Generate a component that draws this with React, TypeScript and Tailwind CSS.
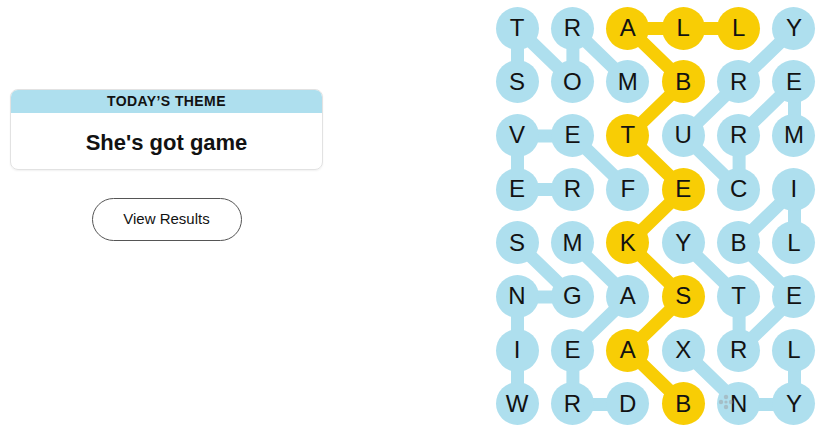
import React from "react";

const letters = [
  "TRALLY",
  "SOMBRE",
  "VETURM",
  "ERFECI",
  "SMKYBL",
  "NGASTE",
  "IEAXRL",
  "WRDBNY",
];

type P = [number, number];

const words: { color: "blue" | "gold"; path: P[] }[] = [
  { color: "blue", path: [[1, 0], [0, 0], [1, 1], [0, 1], [1, 2]] },
  { color: "blue", path: [[3, 2], [2, 1], [2, 0], [3, 0], [3, 1]] },
  { color: "blue", path: [[2, 5], [1, 5], [2, 4], [3, 4], [2, 3], [1, 4], [0, 5]] },
  { color: "blue", path: [[4, 5], [3, 5], [4, 4], [5, 5], [6, 4], [5, 4], [4, 3]] },
  { color: "blue", path: [[6, 5], [7, 5], [7, 4], [6, 3]] },
  { color: "blue", path: [[7, 0], [6, 0], [5, 0], [5, 1], [4, 0]] },
  { color: "blue", path: [[7, 2], [7, 1], [6, 1], [5, 2], [4, 1]] },
  {
    color: "gold",
    path: [[7, 3], [6, 2], [5, 3], [4, 2], [3, 3], [2, 2], [1, 3], [0, 2], [0, 3], [0, 4]],
  },
];

const gold = new Set(words.filter((w) => w.color === "gold").flatMap((w) => w.path.map(([r, c]) => `${r}-${c}`)));

const cx = (c: number) => 21.5 + 55.4 * c;
const cy = (r: number) => 21.5 + 53.7 * r;

function Board() {
  return (
    <div className="relative mt-[6.5px] ml-[172.5px]">
      <svg className="absolute left-0 top-0" width="320" height="420">
        {words.map((w, i) => (
          <polyline
            key={i}
            points={w.path.map(([r, c]) => `${cx(c)},${cy(r)}`).join(" ")}
            fill="none"
            stroke={w.color === "gold" ? "#f8cd05" : "#aedfee"}
            strokeWidth="13"
            strokeLinejoin="round"
            strokeLinecap="round"
          />
        ))}
      </svg>
      <div className="relative grid grid-cols-[repeat(6,43px)] gap-x-[12.4px] gap-y-[10.7px]">
        {letters.map((row, r) =>
          row.split("").map((ch, c) => (
            <div
              key={`${r}-${c}`}
              className={`flex h-[43px] w-[43px] items-center justify-center rounded-full text-[24px] leading-none text-[#121212] ${
                gold.has(`${r}-${c}`) ? "bg-[#f8cd05]" : "bg-[#aedfee]"
              }`}
            >
              {ch}
            </div>
          ))
        )}
      </div>
      {/* faint watermark */}
      <svg className="absolute left-[222px] top-[387px] opacity-40" width="16" height="16" viewBox="0 0 16 16">
        <g fill="#9a8f8f">
          <circle cx="8" cy="3" r="2.2" />
          <circle cx="8" cy="13" r="2.2" />
          <circle cx="3" cy="8" r="2.2" />
          <circle cx="13" cy="8" r="2.2" />
          <circle cx="8" cy="8" r="1.6" />
        </g>
      </svg>
    </div>
  );
}

export default function App() {
  return (
    <div className="flex h-[433px] w-[825px] bg-white font-['Liberation_Sans',Arial,sans-serif] text-[#121212]">
      <div className="ml-[10px] flex w-[313px] flex-col items-center pt-[89px]">
        <div className="w-full overflow-hidden rounded-[8px] border border-[#e2e2e2] shadow-[0_1px_2px_rgba(0,0,0,0.06)]">
          <div className="flex h-[23px] items-center justify-center bg-[#aedfee] text-[14px] font-bold tracking-[0.4px]">
            TODAY&rsquo;S THEME
          </div>
          <div className="flex h-[56px] items-center justify-center pt-[2px] text-[22px] font-bold">
            She's got game
          </div>
        </div>
        <button className="mt-[28px] h-[43px] w-[150px] rounded-full border border-[#555] bg-white text-[15px] text-[#121212]">
          View Results
        </button>
      </div>
      <Board />
    </div>
  );
}
